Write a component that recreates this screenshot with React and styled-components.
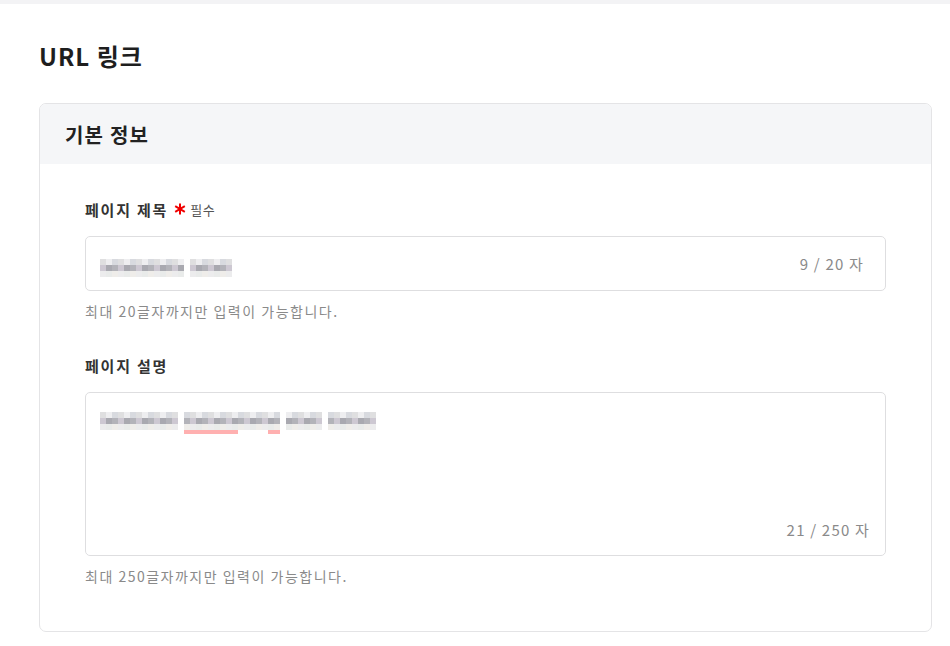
import React from "react";
import styled, { createGlobalStyle } from "styled-components";

const Global = createGlobalStyle`
  html, body { margin: 0; padding: 0; background: #fff; }
  body { font-family: "Noto Sans CJK KR", "Noto Sans", sans-serif; color: #222; }
`;

const TopStrip = styled.div`
  height: 4px;
  background: #f3f3f5;
`;

const Page = styled.main`
  padding: 32px 18px 0 39px;
  display: flex;
  flex-direction: column;
  gap: 27px;
`;

const Title = styled.h1`
  margin: 0;
  font-size: 24px;
  font-weight: 700;
  line-height: 40px;
  color: #1e1e1e;
  letter-spacing: 1px;
`;

const Card = styled.section`
  border: 1px solid #e4e4e6;
  border-radius: 7px;
  overflow: hidden;
`;

const CardHeader = styled.div`
  height: 60px;
  background: #f5f6f8;
  display: flex;
  align-items: center;
  padding-left: 25px;
  font-size: 20px;
  font-weight: 700;
  color: #222;
  letter-spacing: 1.2px;
`;

const CardBody = styled.div`
  padding: 33px 45px 45px 45px;
  display: flex;
  flex-direction: column;
  gap: 32px;
`;

const Field = styled.div`
  display: flex;
  flex-direction: column;
`;

const Label = styled.div`
  display: flex;
  align-items: center;
  gap: 6px;
  font-size: 15px;
  font-weight: 700;
  color: #333;
  height: 24px;
  margin-bottom: 15px;
  letter-spacing: 1.8px;
`;

const Required = styled.span`
  display: inline-flex;
  align-items: center;
  gap: 4px;
  font-size: 13px;
  font-weight: 400;
  color: #555;
  letter-spacing: 0.6px;
`;

const Star = () => (
  <svg width="12" height="12" viewBox="0 0 12 12" aria-hidden="true">
    <g stroke="#f00000" strokeWidth="2" strokeLinecap="butt">
      <line x1="6" y1="0.5" x2="6" y2="11.5" />
      <line x1="1.2" y1="3.2" x2="10.8" y2="8.8" />
      <line x1="1.2" y1="8.8" x2="10.8" y2="3.2" />
    </g>
  </svg>
);

const Box = styled.div`
  border: 1px solid #dedee0;
  border-radius: 5px;
  height: ${(p) => p.$h}px;
  box-sizing: border-box;
  display: flex;
  flex-direction: ${(p) => (p.$multi ? "column" : "row")};
  align-items: ${(p) => (p.$multi ? "stretch" : "center")};
  justify-content: space-between;
  padding: ${(p) => (p.$multi ? "19px 15px 15px 14px" : "0 21px 0 14px")};
`;

const Counter = styled.span`
  font-size: 15px;
  color: #8a8a8a;
  letter-spacing: 1.2px;
  align-self: ${(p) => (p.$end ? "flex-end" : "auto")};
`;

const Help = styled.div`
  margin-top: 10px;
  font-size: 14px;
  color: #8a8a8a;
  line-height: 20px;
  letter-spacing: 1.5px;
`;

const MosaicSvg = styled.svg`
  display: block;
  margin-top: ${(p) => p.$offset || 0}px;
`;

const Mosaic = ({ cols, colors, hl, offset }) => {
  const size = 6;
  const cells = [];
  const rowOpacity = [0.6, 1, 0.5];
  for (let r = 0; r < 3; r++) {
    for (let c = 0; c < cols.length; c++) {
      if (!cols[c]) continue;
      const col = colors[(c * 3 + r * 5) % colors.length];
      cells.push(
        <rect key={`${r}-${c}`} x={c * size} y={r * size} width={size} height={size} fill={col} opacity={rowOpacity[r]} />
      );
    }
  }
  const h = hl
    ? hl.map(([a, b], i) => (
        <rect key={`h${i}`} x={a * size} y={3 * size} width={(b - a) * size} height={4} fill="#ffb0b0" />
      ))
    : null;
  return (
    <MosaicSvg $offset={offset} width={cols.length * size} height={3 * size + (hl ? 4 : 0)} aria-hidden="true">
      {cells}
      {h}
    </MosaicSvg>
  );
};

const grays = ["#c9c9cc", "#d9d9dc", "#b3b3b9", "#e3e3e6", "#d3d8d6", "#cdc8d2", "#bec2c9", "#e0dbd5", "#a9a9b0"];

const titleCols = Array.from({ length: 22 }, (_, i) => (i === 14 ? 0 : 1));
const descCols = Array.from({ length: 46 }, (_, i) => ([13, 30, 37].includes(i) ? 0 : 1));

export default function App() {
  return (
    <>
      <Global />
      <TopStrip />
      <Page>
        <Title>URL 링크</Title>
        <Card>
          <CardHeader>기본 정보</CardHeader>
          <CardBody>
            <Field>
              <Label>
                페이지 제목
                <Required>
                  <Star />필수
                </Required>
              </Label>
              <Box $h={55}>
                <Mosaic cols={titleCols} colors={grays} offset={8} />
                <Counter>9 / 20 자</Counter>
              </Box>
              <Help>최대 20글자까지만 입력이 가능합니다.</Help>
            </Field>
            <Field>
              <Label>페이지 설명</Label>
              <Box $h={164} $multi>
                <Mosaic cols={descCols} colors={grays} hl={[[14, 23], [28, 30]]} />
                <Counter $end>21 / 250 자</Counter>
              </Box>
              <Help>최대 250글자까지만 입력이 가능합니다.</Help>
            </Field>
          </CardBody>
        </Card>
      </Page>
    </>
  );
}
